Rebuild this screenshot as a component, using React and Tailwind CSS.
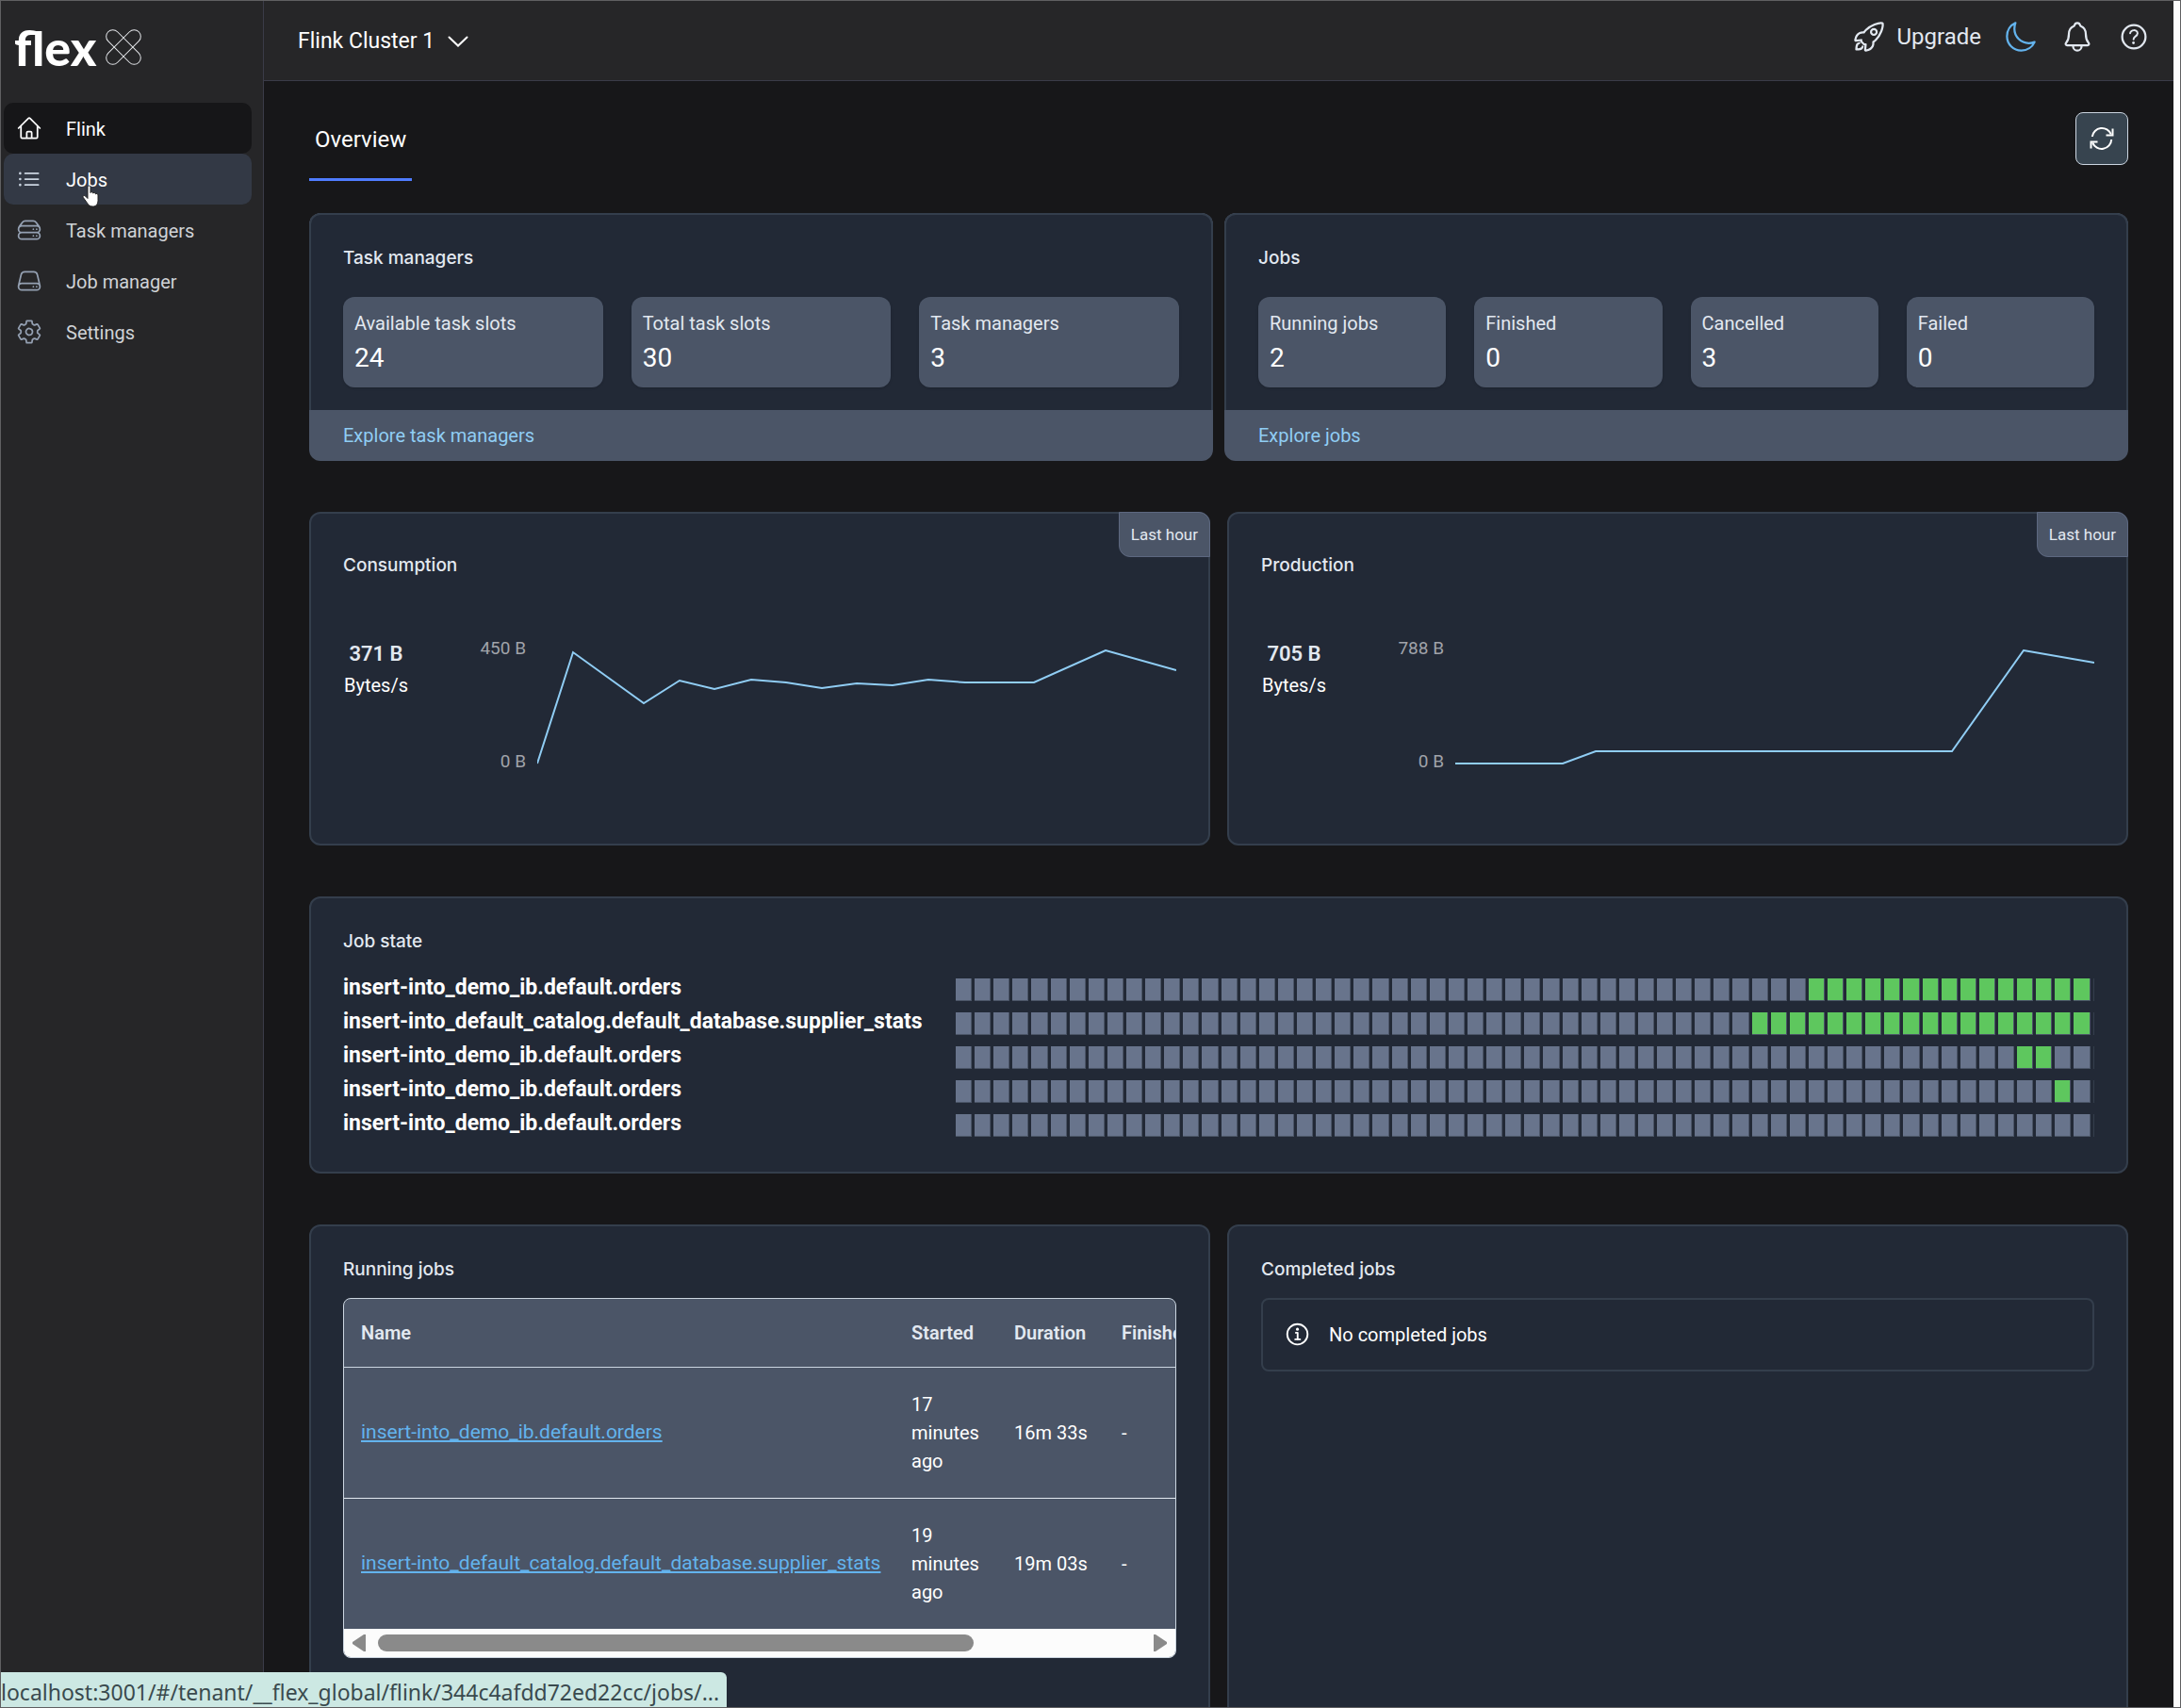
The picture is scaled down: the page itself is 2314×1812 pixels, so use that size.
import {
  HiOutlineHome,
  HiOutlineListBullet,
  HiOutlineServerStack,
  HiOutlineServer,
} from 'react-icons/hi2';
import {
  IoMoonOutline,
  IoNotificationsOutline,
  IoHelpCircleOutline,
  IoInformationCircleOutline,
  IoRocketOutline,
  IoSettingsOutline,
} from 'react-icons/io5';
import clsx from 'clsx';

const NAV = [
  { label: 'Flink', icon: HiOutlineHome, state: 'active' },
  { label: 'Jobs', icon: HiOutlineListBullet, state: 'hover' },
  { label: 'Task managers', icon: HiOutlineServerStack },
  { label: 'Job manager', icon: HiOutlineServer },
  { label: 'Settings', icon: IoSettingsOutline },
];

const TASK_STATS = [
  { label: 'Available task slots', value: 24 },
  { label: 'Total task slots', value: 30 },
  { label: 'Task managers', value: 3 },
];

const JOB_STATS = [
  { label: 'Running jobs', value: 2 },
  { label: 'Finished', value: 0 },
  { label: 'Cancelled', value: 3 },
  { label: 'Failed', value: 0 },
];

const CONSUMPTION = '0,120 38,2 113,56 151,32 188,41 227,31 264,34 302,40 339,35 377,37 415,31 454,34 527,34 603,0 678,21';
const PRODUCTION = '0,120 114,120 149,107 527,107 603,0 678,13';

// running = [first, last] minute of the hour the job was up
const JOB_STATE = [
  { name: 'insert-into_demo_ib.default.orders', running: [45, 59] },
  { name: 'insert-into_default_catalog.default_database.supplier_stats', running: [42, 59] },
  { name: 'insert-into_demo_ib.default.orders', running: [56, 57] },
  { name: 'insert-into_demo_ib.default.orders', running: [58, 58] },
  { name: 'insert-into_demo_ib.default.orders', running: null },
];

const RUNNING_JOBS = [
  { name: 'insert-into_demo_ib.default.orders', started: '17 minutes ago', duration: '16m 33s' },
  {
    name: 'insert-into_default_catalog.default_database.supplier_stats',
    started: '19 minutes ago',
    duration: '19m 03s',
  },
];

const MINUTES = Array.from({ length: 60 }, (_, i) => i);

function Logo() {
  return (
    <a href="#" className="flex items-center gap-[10px] px-[14px] pt-[22px] text-white" aria-label="flex">
      <span className="font-['Lato'] text-[52px] leading-[54px] font-black">flex</span>
      <svg width="38" height="38" viewBox="0 0 38 38" fill="none" stroke="#e5e7eb" strokeWidth="1" aria-hidden="true">
        <rect x="-4" y="12" width="46" height="14" rx="7" transform="rotate(45 19 19)" />
        <rect x="-4" y="12" width="46" height="14" rx="7" transform="rotate(-45 19 19)" />
      </svg>
    </a>
  );
}

function HandCursor() {
  return (
    <svg
      width="19"
      height="24"
      viewBox="0 0 19 24"
      className="absolute top-[33px] left-[83px]"
      fill="#fff"
      stroke="#222"
      strokeWidth="1"
      aria-hidden="true"
    >
      <path d="M6 2.5c0-2 3-2 3 0v6c.4-1.300 2.800-1 2.800.6.500-1.100 2.700-.7 2.700.8.600-.9 2.500-.5 2.500 1v5.600c0 4-1.800 6.500-5.600 6.500-3 0-4.500-1.300-6-3.800L1.300 13.500c-.9-1.700 1-2.700 2.300-1.400L6 14.500z" />
    </svg>
  );
}

function Sidebar() {
  return (
    <aside className="w-[279px] shrink-0 border-r border-[#3a3b48] bg-[#262628]">
      <Logo />
      <nav className="mt-[32px] mr-[12px] ml-[3px]">
        {NAV.map(({ label, icon: Icon, state }) => (
          <a
            key={label}
            href={`#${label}`}
            className={clsx(
              'relative flex h-[54px] items-center gap-[25px] rounded-[10px] pl-[13px]',
              state === 'active' && 'bg-[#161618] text-white',
              state === 'hover' && 'bg-[#333945] text-white',
              !state && 'text-[#cfd2d6]',
            )}
          >
            <Icon
              size={28}
              className={clsx('shrink-0', state !== 'active' && (state ? 'text-[#cbd5e1]' : 'text-[#94a0b2]'))}
              aria-hidden="true"
            />
            <span className="pt-[2px]">{label}</span>
            {state === 'hover' && <HandCursor />}
          </a>
        ))}
      </nav>
    </aside>
  );
}

function Header() {
  return (
    <header className="flex h-[85px] shrink-0 items-center justify-between border-b border-[#3a3b48] bg-[#262628] pr-[24px] pl-[36px] text-[#e2e8f0]">
      <div className="flex items-center pt-[2px]">
        <select aria-label="Cluster" className="w-[159px] appearance-none bg-transparent text-[23px] text-white">
          <option>Flink Cluster 1</option>
        </select>
        <svg width="22" height="12" viewBox="0 0 22 12" fill="none" stroke="#fff" strokeWidth="2" strokeLinecap="round" aria-hidden="true">
          <path d="m1.500 1.500 9.500 9 9.500-9" />
        </svg>
      </div>
      <div className="flex items-center gap-[24px] pb-[8px]">
        <button type="button" className="flex items-center gap-[12px] text-[24px]">
          <IoRocketOutline size={36} aria-hidden="true" />
          Upgrade
        </button>
        <button type="button" aria-label="Toggle dark mode" className="text-[#63b3ed]">
          <IoMoonOutline size={36} />
        </button>
        <button type="button" aria-label="Notifications">
          <IoNotificationsOutline size={36} />
        </button>
        <button type="button" aria-label="Help">
          <IoHelpCircleOutline size={36} />
        </button>
      </div>
    </header>
  );
}

function Card({ title, className, children }) {
  return (
    <section className={clsx('relative rounded-[12px] border-2 border-[#343e4c] bg-[#222936] px-[34px]', className)}>
      <h2 className="font-['Inter'] text-[19px] leading-[30px] font-medium">{title}</h2>
      {children}
    </section>
  );
}

function StatCard({ title, stats, link, columns }) {
  return (
    <section className="flex flex-col overflow-hidden rounded-[12px] bg-[#4b5567]">
      <div className="rounded-t-[12px] border-2 border-b-0 border-[#343e4c] bg-[#222936] px-[34px] pt-[31px] pb-[24px]">
        <h2 className="font-['Inter'] text-[19px] leading-[30px] font-medium">{title}</h2>
        <dl className={clsx('mt-[26px] grid gap-[30px]', columns)}>
          {stats.map(({ label, value }) => (
            <div key={label} className="h-[96px] rounded-[12px] bg-[#4b5567] px-3 pt-[12px] shadow-sm">
              <dt className="leading-[32px] whitespace-nowrap">{label}</dt>
              <dd className="text-[28px] leading-[42px] text-white">{value}</dd>
            </div>
          ))}
        </dl>
      </div>
      <a href="#explore" className="px-[36px] leading-[54px] text-[#90cdf4]">
        {link}
      </a>
    </section>
  );
}

function ChartCard({ title, value, max, points }) {
  return (
    <Card title={title} className="h-[354px] pt-[40px]">
      <span className="absolute -top-[2px] -right-[2px] rounded-tr-[12px] rounded-bl-[12px] border border-[#5d6880] bg-[#4b5567] px-3 text-[17px] leading-[46px]">
        Last hour
      </span>
      <div className="mt-[58px] flex">
        <div className="w-[70px] shrink-0 pt-[3px] text-center">
          <p className="text-[22px] leading-[36px] font-semibold">{value}</p>
          <p className="leading-[30px] text-white">Bytes/s</p>
        </div>
        <div className="flex h-[150px] w-[124px] shrink-0 flex-col justify-between text-right text-[19px] leading-[30px] text-[#a0a3aa]">
          <span>{max}</span>
          <span>0 B</span>
        </div>
        <svg
          className="mt-[16px] ml-[12px] h-[122px] min-w-0 flex-1"
          viewBox="0 -1 678 122"
          preserveAspectRatio="none"
          role="img"
          aria-label={`${title} over the last hour`}
        >
          <polyline points={points} fill="none" stroke="#90cdf4" strokeWidth="2" vectorEffect="non-scaling-stroke" />
        </svg>
      </div>
    </Card>
  );
}

function JobState() {
  return (
    <Card title="Job state" className="h-[294px] pt-[31px]">
      <ul className="mt-[16px]">
        {JOB_STATE.map(({ name, running }, row) => (
          <li key={row} className="flex h-[36px] items-center">
            <span className="w-[650px] shrink-0 text-[23px] leading-[36px] font-bold text-white">{name}</span>
            <div className="mt-[3px] flex h-[24px] min-w-0 flex-1 border-r border-[#343e4c]">
              {MINUTES.map((m) => (
                <div key={m} className="min-w-0 flex-1 pr-[3px]">
                  <div
                    className={clsx(
                      'h-full border-r border-b border-[#4b5567]',
                      running && m >= running[0] && m <= running[1] ? 'bg-[#5ec75e]' : 'bg-[#68748c]',
                    )}
                  />
                </div>
              ))}
            </div>
          </li>
        ))}
      </ul>
    </Card>
  );
}

function RunningJobs() {
  return (
    <Card title="Running jobs" className="min-h-[560px] pt-[31px]">
      <div className="mt-[15px] overflow-hidden rounded-[8px] border border-[#cbd5e0] bg-[#4b5567]">
        <table className="w-[1156px] table-fixed text-left">
          <thead>
            <tr className="h-[72px] border-b border-[#cbd5e0]">
              <th className="w-[584px] px-[18px] font-semibold">Name</th>
              <th className="w-[109px] px-[18px] font-semibold">Started</th>
              <th className="w-[114px] px-[18px] font-semibold">Duration</th>
              <th className="px-[18px] font-semibold">Finished</th>
            </tr>
          </thead>
          <tbody>
            {RUNNING_JOBS.map(({ name, started, duration }) => (
              <tr key={name} className="h-[139px] border-b border-[#e2e8f0] text-white last:border-b-0">
                <td className="px-[18px] whitespace-nowrap">
                  <a href="#job" className="text-[21px] text-[#63b3ed] underline">
                    {name}
                  </a>
                </td>
                <td className="px-[18px] leading-[30px]">{started}</td>
                <td className="px-[18px] whitespace-nowrap">{duration}</td>
                <td className="px-[18px]">-</td>
              </tr>
            ))}
          </tbody>
        </table>
        <div className="flex h-[30px] items-center justify-between bg-[#fcfcfc] px-[9px]" aria-hidden="true">
          <svg width="14" height="18" viewBox="0 0 14 18" fill="#8a8a8a">
            <path d="M14 0v18h-2L0 10V8L12 0z" />
          </svg>
          <div className="mx-[13px] flex-1">
            <div className="h-[18px] w-[78%] rounded-full bg-[#8a8a8a]" />
          </div>
          <svg width="14" height="18" viewBox="0 0 14 18" fill="#8a8a8a">
            <path d="M0 0v18h2l12-8V8L2 0z" />
          </svg>
        </div>
      </div>
    </Card>
  );
}

function CompletedJobs() {
  return (
    <Card title="Completed jobs" className="pt-[31px]">
      <p className="mt-[15px] flex h-[78px] items-center gap-[18px] rounded-[8px] border-2 border-[#343e4c] pl-[22px] text-white">
        <IoInformationCircleOutline size={30} aria-hidden="true" />
        No completed jobs
      </p>
    </Card>
  );
}

function RefreshIcon() {
  return (
    <svg width="26" height="26" viewBox="0 0 26 26" fill="none" stroke="#fff" strokeWidth="2" aria-hidden="true">
      <path d="M2.800 11a10.400 10.400 0 0 1 20-2.500M23.200 14a10.400 10.400 0 0 1-20 3.500" />
      <path d="M24.500 2.500v7h-7M1.500 23.500v-7h7" />
    </svg>
  );
}

export default function App() {
  return (
    <div className="relative flex h-screen overflow-hidden border border-[#606062] bg-[#171719] font-['Roboto',sans-serif] text-[20px] text-[#e2e8f0]">
      <Sidebar />
      <div className="flex min-w-0 flex-1 flex-col">
        <Header />
        <main className="min-h-0 flex-1 overflow-hidden px-[48px] pt-[33px]">
          <div className="flex items-start justify-between">
            <div role="tablist">
              <button
                type="button"
                role="tab"
                aria-selected="true"
                className="border-b-[3px] border-[#4f7cff] px-[6px] pt-[12px] pb-[24px] text-[24px] leading-[34px] text-white"
              >
                Overview
              </button>
            </div>
            <button
              type="button"
              aria-label="Refresh"
              className="flex h-[56px] w-[56px] items-center justify-center rounded-[8px] border border-[#cbd5e0] bg-[#37444f]"
            >
              <RefreshIcon />
            </button>
          </div>

          <div className="mt-[34px] grid grid-cols-2 gap-3">
            <StatCard title="Task managers" stats={TASK_STATS} columns="grid-cols-3" link="Explore task managers" />
            <StatCard title="Jobs" stats={JOB_STATS} columns="grid-cols-4" link="Explore jobs" />
          </div>

          <div className="mt-[54px] grid grid-cols-2 gap-[18px]">
            <ChartCard title="Consumption" value="371 B" max="450 B" points={CONSUMPTION} />
            <ChartCard title="Production" value="705 B" max="788 B" points={PRODUCTION} />
          </div>

          <div className="mt-[54px]">
            <JobState />
          </div>

          <div className="mt-[54px] grid grid-cols-2 gap-[18px]">
            <RunningJobs />
            <CompletedJobs />
          </div>
        </main>
      </div>
      <div className="w-[7px] shrink-0 bg-[#fcfcfc]" />
      <div className="absolute bottom-0 left-0 rounded-tr-[6px] bg-[#cce8e3] pt-[6px] pr-[8px] font-['Noto_Sans',sans-serif] text-[23px] leading-[31px] text-[#3a4a4e]">
        localhost:3001/#/tenant/__flex_global/flink/344c4afdd72ed22cc/jobs/...
      </div>
    </div>
  );
}
